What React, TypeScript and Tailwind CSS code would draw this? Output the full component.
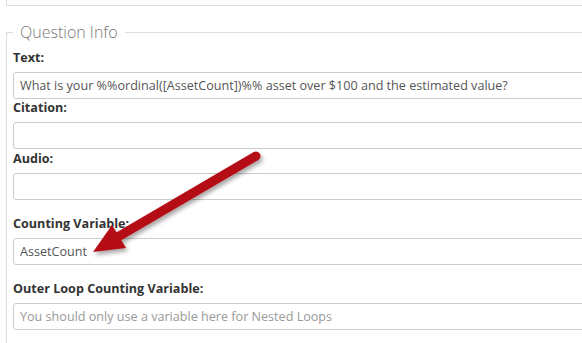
import React from 'react';

const font = { fontFamily: '"Open Sans", "Liberation Sans", sans-serif' };

function Field({ label, value, placeholder, top }: { label: string; value?: string; placeholder?: string; top: string }) {
    return (
        <div className={top}>
            <label className="block text-[12.6px] leading-[18px] font-bold text-[#333] mb-[5px]">{label}</label>
            <input
                readOnly
                value={value ?? ''}
                placeholder={placeholder}
                className="block w-full h-[27px] border border-[#ccc] rounded-[3px] px-[6px] text-[12.6px] text-[#555] placeholder-[#999] bg-white outline-none"
            />
        </div>
    );
}

export default function App() {
    return (
        <div className="relative w-full h-[343px] overflow-hidden bg-white" style={font}>
            {/* previous panel edge */}
            <div className="ml-[6px] w-[640px] h-[6px] border-l border-b border-[#ddd]" />

            <fieldset className="ml-[6px] mt-[16px] w-[640px] border border-[#ddd] pl-[6px] pr-0 pb-[20px]">
                <legend className="px-[7px] text-[16px] leading-[20px] font-light text-[#777]">Question Info</legend>

                <div className="mt-[7px]">
                    <Field
                        top=""
                        label="Text:"
                        value="What is your %%ordinal([AssetCount])%% asset over $100 and the estimated value?"
                    />
                    <Field top="mt-0" label="Citation:" />
                    <Field top="mt-[1px]" label="Audio:" />
                    <Field top="mt-[15px]" label="Counting Variable:" value="AssetCount" />
                    <Field
                        top="mt-[15px]"
                        label="Outer Loop Counting Variable:"
                        placeholder="You should only use a variable here for Nested Loops"
                    />
                </div>
            </fieldset>

            {/* annotation arrow */}
            <svg className="absolute inset-0 pointer-events-none" width="582" height="343" viewBox="0 0 582 343">
                <defs>
                    <filter id="sh" x="-20%" y="-20%" width="140%" height="140%">
                        <feDropShadow dx="2" dy="3" stdDeviation="2" floodColor="#000" floodOpacity="0.35" />
                    </filter>
                </defs>
                <g filter="url(#sh)">
                    <line x1="256" y1="156" x2="116" y2="238" stroke="#b50e16" strokeWidth="9" strokeLinecap="round" />
                    <polygon points="93,252 112,225 126,248" fill="#b50e16" />
                </g>
            </svg>
        </div>
    );
}
